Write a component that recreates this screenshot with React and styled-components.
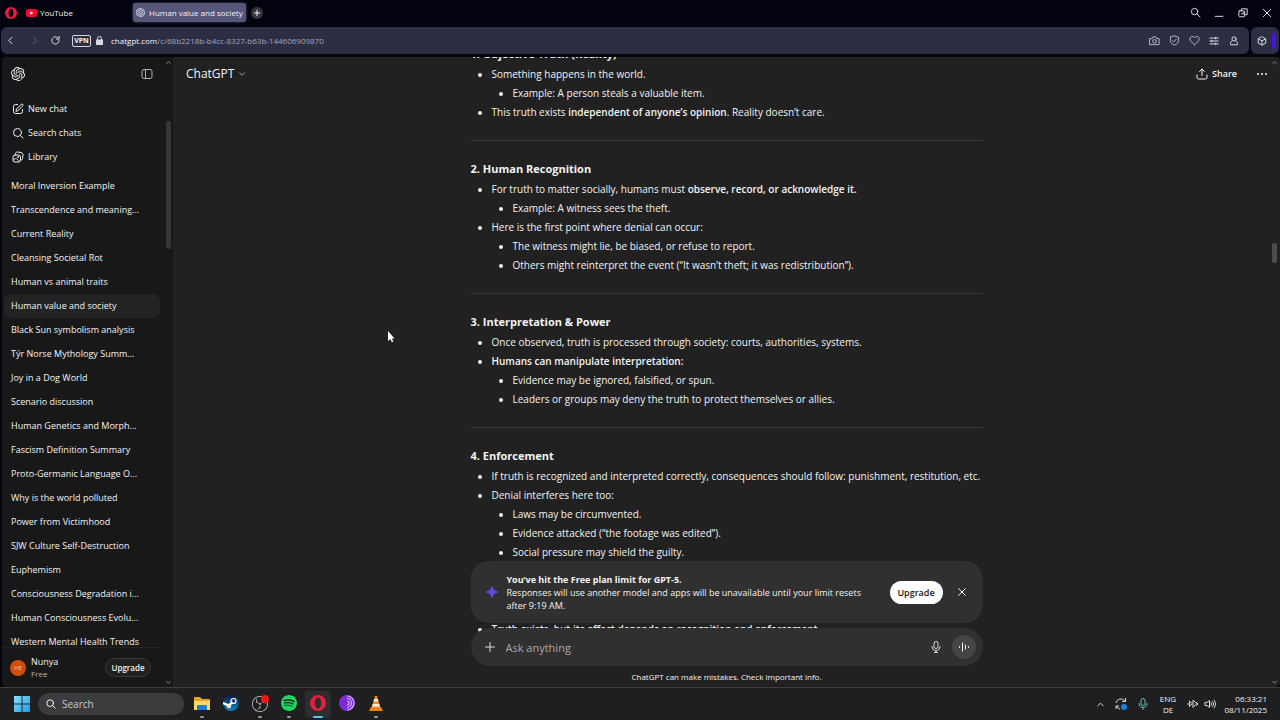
import React from "react";
import styled, { createGlobalStyle, css } from "styled-components";
import { SiOpenai, SiSpotify, SiSteam, SiObsstudio } from "react-icons/si";

const Global = createGlobalStyle`
  *, *::before, *::after { box-sizing: border-box; }
  body { margin: 0; background: #04040f; }
  body, button, input { font-family: "Open Sans", "Noto Sans", sans-serif; }
  button { margin: 0; padding: 0; border: 0; background: none; color: inherit; font-size: inherit; line-height: inherit; }
  a { color: inherit; text-decoration: none; }
  ul, h3, p { margin: 0; padding: 0; }
  svg { display: block; flex: none; }
`;

const Desktop = styled.div`
  display: flex;
  flex-direction: column;
  height: 100vh;
  overflow: hidden;
  color: #f3f3f3;
  font-size: 9px;
  line-height: 14px;
`;

/* browser chrome */
const TabBar = styled.header`
  flex: none;
  display: flex;
  align-items: center;
  height: 27px;
  padding: 0 1px 2px 5px;
  background: #03030f;
`;
const Tab = styled.button`
  flex: none;
  display: flex;
  align-items: center;
  gap: ${(p) => (p.$active ? 4 : 3)}px;
  width: ${(p) => (p.$active ? 113 : 110)}px;
  height: 19px;
  padding: 0 3px;
  border-radius: 3px;
  white-space: nowrap;
  color: #f4f4f8;
  font-size: 8px;
  ${(p) => p.$active && css`background: #54567a; box-shadow: 0 0 3px #45476a;`}
`;
const OperaButton = styled.button`
  margin-right: 6px;
`;
const NewTab = styled.button`
  display: grid;
  place-items: center;
  width: 12px;
  height: 12px;
  margin-left: 5px;
  border-radius: 50%;
  background: #34353f;
`;
const WindowButtons = styled.div`
  display: flex;
  margin-left: auto;
`;
const IconCell = styled.button`
  display: grid;
  place-items: center;
  flex: none;
  width: ${(p) => p.$w || 20}px;
  height: 20px;
  color: ${(p) => p.$color || "#d8d8e0"};
`;
const ToolRow = styled.div`
  flex: none;
  display: flex;
  gap: 2px;
  height: 27px;
  padding: 0 1px;
`;
const ToolPanel = styled.div`
  display: flex;
  align-items: center;
  border-radius: 6px;
  background: #2c2e44;
`;
const AddressPanel = styled(ToolPanel)`
  flex: 1;
  padding-right: 5px;
`;
const SidePanel = styled(ToolPanel)`
  width: 28px;
  padding: 0 3px 0 1px;
  justify-content: space-between;
`;
const PurpleBar = styled.span`
  width: 4px;
  height: 16px;
  border-radius: 2px;
  background: #4613de;
`;
const Vpn = styled.button`
  width: 19px;
  height: 12px;
  margin: 0 5px 0 8px;
  border: 1px solid #d5d5de;
  border-radius: 2px;
  font-size: 7px;
  line-height: 10px;
  font-weight: 700;
`;
const Address = styled.div`
  flex: 1;
  margin-left: 8px;
  color: #a5a6b8;
  font-size: 8px;
  b { color: #f4f4f8; font-weight: 400; }
`;

/* page */
const Page = styled.div`
  flex: 1;
  min-height: 0;
  display: flex;
  margin: 3px 0 0 2px;
  border-radius: 4px 4px 5px 5px;
  overflow: hidden;
  background: #212121;
`;
const Sidebar = styled.aside`
  flex: none;
  display: flex;
  width: 171px;
  background: #181818;
`;
const SidebarBody = styled.div`
  flex: 1;
  min-width: 0;
  display: flex;
  flex-direction: column;
`;
const SidebarHead = styled.div`
  flex: none;
  display: flex;
  align-items: center;
  justify-content: space-between;
  height: 40px;
  padding: 0 11px 6px 9px;
`;
const Nav = styled.nav`
  flex: none;
  display: flex;
  flex-direction: column;
  margin-bottom: 5px;
`;
const NavLink = styled.a`
  display: flex;
  align-items: center;
  gap: 4px;
  height: 24px;
  padding-left: 10px;
`;
const History = styled.nav`
  flex: 1;
  min-height: 0;
  overflow: hidden;
  padding: 0 4px 0 2px;
`;
const HistoryLink = styled.a`
  display: block;
  height: 24px;
  padding: 0 7px;
  border-radius: 7px;
  line-height: 24px;
  white-space: nowrap;
  background: ${(p) => (p.$active ? "#232323" : "transparent")};
`;
const Account = styled.div`
  flex: none;
  display: flex;
  align-items: center;
  gap: 5px;
  height: 40px;
  padding: 0 13px 0 8px;
  border-top: 1px solid #222;
`;
const Avatar = styled.span`
  width: 16px;
  height: 16px;
  border-radius: 50%;
  background: #d0500b;
  color: #f5c8ad;
  font-size: 6px;
  line-height: 16px;
  text-align: center;
`;
const Who = styled.div`
  flex: 1;
  line-height: 12px;
  small { display: block; color: #b5b5b5; font-size: 8px; }
`;
const OutlineButton = styled.button`
  width: 46px;
  height: 19px;
  border: 1px solid #3a3a3a;
  border-radius: 10px;
  background: #202020;
  font-size: 8px;
  font-weight: 600;
`;
const Scroll = styled.div`
  flex: none;
  display: flex;
  flex-direction: column;
  align-items: center;
  justify-content: space-between;
  width: 9px;
  padding: 2px 0 1px;
  color: #8b8b8b;
`;
const Thumb = styled.span`
  width: 5px;
  height: ${(p) => p.$h}px;
  border-radius: 2px;
  background: ${(p) => p.$bg};
`;
const ScrollTrack = styled.div`
  flex: 1;
  padding-top: ${(p) => p.$top}px;
  display: flex;
`;

const Main = styled.main`
  position: relative;
  flex: 1;
  min-width: 0;
  overflow: hidden;
`;
const MainHead = styled.div`
  position: absolute;
  inset: 0 13px auto 13px;
  display: flex;
  align-items: center;
  justify-content: space-between;
  height: 34px;
`;
const ModelButton = styled.button`
  display: flex;
  align-items: center;
  gap: 3px;
  font-size: 12px;
`;
const HeadActions = styled.div`
  display: flex;
  gap: 20px;
  font-weight: 600;
`;
const ShareButton = styled.button`
  display: flex;
  align-items: center;
  gap: 4px;
  font-weight: 600;
`;
const PageScroll = styled.div`
  position: absolute;
  inset: 0 1px 0 auto;
  display: flex;
`;
const Article = styled.article`
  width: 512px;
  margin: -13px auto 0;
  font-size: 10px;
  line-height: 19px;
  white-space: nowrap;
`;
const Section = styled.section`
  padding-bottom: 18px;
  & + & { border-top: 1px solid #383838; padding-top: 18px; }
  h3 { font-size: 11px; line-height: 20px; font-weight: 700; margin-bottom: 1px; }
  strong { font-weight: 600; }
  ul { list-style: disc; padding-left: 21px; }
`;
const Closing = styled.ul`
  padding: 40px 0 0 21px;
  font-weight: 600;
`;
const Dock = styled.div`
  position: absolute;
  inset: auto 0 0 0;
  display: flex;
  flex-direction: column;
  align-items: center;
`;
const Notice = styled.div`
  display: flex;
  align-items: center;
  width: 512px;
  height: 62px;
  margin-bottom: 5px;
  padding: 0 12px 0 14px;
  border-radius: 18px;
  background: #303030;
  line-height: 13px;
  svg { margin-right: 8px; }
`;
const NoticeText = styled.div`
  flex: 1;
  max-width: 360px;
  p { white-space: nowrap; }
  strong { display: block; font-weight: 700; }
`;
const LightButton = styled.button`
  width: 53px;
  height: 23px;
  margin-left: auto;
  margin-right: 11px;
  border-radius: 12px;
  background: #fff;
  color: #161616;
  font-weight: 600;
`;
const CloseButton = styled.button`
  width: 17px;
  height: 20px;
  display: grid;
  place-items: center;
  svg { margin: 0; }
`;
const Composer = styled.form`
  display: flex;
  align-items: center;
  width: 512px;
  height: 38px;
  padding: 0 7px 0 9px;
  border-radius: 19px;
  background: #303030;
`;
const Prompt = styled.input`
  flex: 1;
  min-width: 0;
  margin-left: 6px;
  padding: 0;
  border: 0;
  outline: 0;
  background: none;
  color: #f3f3f3;
  font-size: 11px;
  &::placeholder { color: #a9a9a9; opacity: 1; }
`;
const VoiceButton = styled.button`
  display: grid;
  place-items: center;
  width: 24px;
  height: 24px;
  margin-left: 6px;
  border-radius: 50%;
  background: #454545;
`;
const Disclaimer = styled.p`
  width: 512px;
  height: 21px;
  background: #212121;
  font-size: 8px;
  line-height: 21px;
  text-align: center;
`;

/* taskbar */
const Taskbar = styled.footer`
  flex: none;
  display: flex;
  align-items: center;
  height: 33px;
  padding: 0 13px 0 14px;
  border-top: 1px solid #3d3d40;
  background: #1f1f21;
`;
const SearchBox = styled.label`
  display: flex;
  align-items: center;
  gap: 6px;
  width: 146px;
  height: 22px;
  margin: 0 5px 0 8px;
  padding: 0 8px;
  border-radius: 11px;
  background: #3c3c3e;
  input {
    flex: 1; min-width: 0; padding: 0; border: 0; outline: 0;
    background: none; color: #eee; font-size: 10px;
  }
  input::placeholder { color: #c9c9c9; opacity: 1; }
`;
const Apps = styled.div`
  display: flex;
  gap: 3px;
`;
const AppButton = styled.button`
  display: flex;
  flex-direction: column;
  align-items: center;
  justify-content: space-between;
  width: 26px;
  height: 27px;
  padding: 4px 0 0;
  border-radius: 3px;
  background: ${(p) => (p.$active ? "#2d2d30" : "none")};
  &::after {
    content: "";
    width: ${(p) => (p.$active ? 10 : 4)}px;
    height: 2px;
    border-radius: 1px;
    background: ${(p) => (p.$active ? "#63c4ec" : p.$running ? "#9a9a9a" : "transparent")};
  }
`;
const Tray = styled.div`
  display: flex;
  align-items: center;
  margin-left: auto;
  font-size: 8px;
  line-height: 11px;
`;
const Lang = styled.button`
  width: 28px;
  text-align: center;
`;
const Clock = styled.button`
  width: 51px;
  text-align: right;
`;
const Pointer = styled.svg`
  position: absolute;
  left: 387px;
  top: 330px;
`;

const Line = ({ d, size = 12, w = 1, box = 24, children, ...rest }) => (
  <svg width={size} height={size} viewBox={`0 0 ${box} ${box}`} fill="none" stroke="currentColor"
    strokeWidth={(w * box) / size} strokeLinecap="round" strokeLinejoin="round" aria-hidden="true" {...rest}>
    {d && <path d={d} />}
    {children}
  </svg>
);

const OperaLogo = ({ size, color = "#f5183f" }) => (
  <svg width={size} height={size} viewBox="0 0 24 24" aria-hidden="true">
    <path fill={color} fillRule="evenodd" d="M12 0a12 12 0 1 0 0 24A12 12 0 0 0 12 0Zm0 3.600c2.800 0 4.900 3.600 4.900 8.400s-2.100 8.400-4.900 8.400-4.900-3.600-4.900-8.400 2.100-8.400 4.900-8.400Z" />
  </svg>
);

const UP = "M6 15l6-6 6 6";
const DOWN = "M6 9l6 6 6-6";

const chats = [
  "Moral Inversion Example", "Transcendence and meaning...", "Current Reality", "Cleansing Societal Rot",
  "Human vs animal traits", "Human value and society", "Black Sun symbolism analysis",
  "Týr Norse Mythology Summ...", "Joy in a Dog World", "Scenario discussion", "Human Genetics and Morph...",
  "Fascism Definition Summary", "Proto-Germanic Language O...", "Why is the world polluted",
  "Power from Victimhood", "SJW Culture Self-Destruction", "Euphemism", "Consciousness Degradation i...",
  "Human Consciousness Evolu...", "Western Mental Health Trends",
];

export default function App() {
  return (
    <Desktop>
      <Global />
      <TabBar>
        <OperaButton aria-label="Opera menu"><OperaLogo size={12} /></OperaButton>
        <Tab>
          <svg width="11" height="8" viewBox="0 0 22 16" aria-hidden="true">
            <rect width="22" height="16" rx="4" fill="#ff0033" /><path d="M8.500 4.500v7l6-3.500z" fill="#fff" />
          </svg>
          YouTube
        </Tab>
        <Tab $active><SiOpenai size={9} />Human value and society</Tab>
        <NewTab aria-label="New tab"><Line size={8} d="M12 4v16M4 12h16" /></NewTab>
        <WindowButtons>
          <IconCell $w={24} aria-label="Search tabs"><Line size={11}><circle cx="10" cy="10" r="7" /><path d="M15 15l7 7" /></Line></IconCell>
          <IconCell $w={24} aria-label="Minimize"><Line size={10} d="M3 20h18" /></IconCell>
          <IconCell $w={24} aria-label="Restore"><Line size={10}><rect x="2" y="7" width="14" height="14" rx="2" /><path d="M8 7V2h14v14h-6M8 14h6V9" /></Line></IconCell>
          <IconCell $w={24} aria-label="Close"><Line size={10} d="M3 3l18 18M21 3L3 21" /></IconCell>
        </WindowButtons>
      </TabBar>
      <ToolRow>
        <AddressPanel>
          <IconCell aria-label="Back"><Line size={11} d="M13 5l-7 7 7 7" /></IconCell>
          <IconCell $w={26} $color="#62647a" aria-label="Forward"><Line size={11} d="M9 5l7 7-7 7" /></IconCell>
          <IconCell $w={17} aria-label="Reload"><Line size={11} d="M20 12a8 8 0 1 1-2.500-6M20 3v6h-6" /></IconCell>
          <Vpn>VPN</Vpn>
          <svg width="7" height="9" viewBox="0 0 14 18" aria-hidden="true">
            <rect y="7" width="14" height="11" rx="1" fill="#d8d8e0" /><path d="M3 8V5a4 4 0 0 1 8 0v3" fill="none" stroke="#d8d8e0" strokeWidth="2" />
          </svg>
          <Address><b>chatgpt.com</b>/c/68b2218b-b4cc-8327-b63b-144606909870</Address>
          <IconCell $color="#b4b5c6" aria-label="Snapshot"><Line size={11}><path d="M2 8h5l2-4h6l2 4h5v13H2z" /><circle cx="12" cy="14" r="4" /></Line></IconCell>
          <IconCell $color="#b4b5c6" aria-label="Shield"><Line size={11} d="M12 2l9 3v7c0 5-4 8-9 10-5-2-9-5-9-10V5zM8 12l3 3 5-6" /></IconCell>
          <IconCell $color="#b4b5c6" aria-label="Favourites"><Line size={11} d="M12 21C5 16 2 12 2 8.500 2 5 4.500 3 7 3s4 1.500 5 3c1-1.500 2.500-3 5-3s5 2 5 5.500C22 12 19 16 12 21z" /></IconCell>
          <IconCell aria-label="Easy setup"><Line size={10} d="M2 5h20M2 12h20M2 19h20M16 3v4M7 10v4M16 17v4" /></IconCell>
          <IconCell aria-label="Profile"><Line size={10}><circle cx="12" cy="7" r="5" /><path d="M8 11c-4 2-5 5-4 10h16c1-5 0-8-4-10" /></Line></IconCell>
        </AddressPanel>
        <SidePanel>
          <IconCell aria-label="Extensions"><Line size={10} d="M12 2l9 5v10l-9 5-9-5V7zM4 7l8 5 8-5M12 12v9" /></IconCell>
          <PurpleBar />
        </SidePanel>
      </ToolRow>

      <Page>
        <Sidebar>
          <SidebarBody>
            <SidebarHead>
              <SiOpenai size={14} />
              <button aria-label="Close sidebar"><Line size={12} color="#b0b0b0"><rect x="2" y="3" width="20" height="18" rx="4" /><path d="M9 3v18" /></Line></button>
            </SidebarHead>
            <Nav>
              <NavLink href="#new"><Line size={12} d="M11 3H7a4 4 0 0 0-4 4v10a4 4 0 0 0 4 4h10a4 4 0 0 0 4-4v-4M8 16l1-4 9.500-9.500a2 2 0 0 1 3 3L12 15z" />New chat</NavLink>
              <NavLink href="#search"><Line size={12}><circle cx="11" cy="11" r="8" /><path d="M17 17l5 5" /></Line>Search chats</NavLink>
              <NavLink href="#library"><Line size={12}><rect x="2" y="8" width="15" height="14" rx="4" /><path d="M7 5c1-3 2-3 4-3l7 1c3 1 4 2 4 5l-1 7c0 2-1 3-3 3M3 18c4-5 7-4 11 3" /><circle cx="12" cy="12" r="1" /></Line>Library</NavLink>
            </Nav>
            <History>
              {chats.map((c) => <HistoryLink key={c} href="#chat" $active={c === "Human value and society"}>{c}</HistoryLink>)}
            </History>
            <Account>
              <Avatar>HE</Avatar>
              <Who>Nunya<small>Free</small></Who>
              <OutlineButton>Upgrade</OutlineButton>
            </Account>
          </SidebarBody>
          <Scroll>
            <Line size={7} d={UP} />
            <ScrollTrack $top={55}><Thumb $h={128} $bg="#363636" /></ScrollTrack>
            <Line size={7} d={DOWN} />
          </Scroll>
        </Sidebar>

        <Main>
          <Article>
            <Section>
              <h3>1. Objective Truth (Reality)</h3>
              <ul>
                <li>Something happens in the world.
                  <ul><li>Example: A person steals a valuable item.</li></ul>
                </li>
                <li>This truth exists <strong>independent of anyone’s opinion</strong>. Reality doesn’t care.</li>
              </ul>
            </Section>
            <Section>
              <h3>2. Human Recognition</h3>
              <ul>
                <li>For truth to matter socially, humans must <strong>observe, record, or acknowledge it.</strong>
                  <ul><li>Example: A witness sees the theft.</li></ul>
                </li>
                <li>Here is the first point where denial can occur:
                  <ul>
                    <li>The witness might lie, be biased, or refuse to report.</li>
                    <li>Others might reinterpret the event (“It wasn’t theft; it was redistribution”).</li>
                  </ul>
                </li>
              </ul>
            </Section>
            <Section>
              <h3>3. Interpretation &amp; Power</h3>
              <ul>
                <li>Once observed, truth is processed through society: courts, authorities, systems.</li>
                <li><strong>Humans can manipulate interpretation:</strong>
                  <ul>
                    <li>Evidence may be ignored, falsified, or spun.</li>
                    <li>Leaders or groups may deny the truth to protect themselves or allies.</li>
                  </ul>
                </li>
              </ul>
            </Section>
            <Section>
              <h3>4. Enforcement</h3>
              <ul>
                <li>If truth is recognized and interpreted correctly, consequences should follow: punishment, restitution, etc.</li>
                <li>Denial interferes here too:
                  <ul>
                    <li>Laws may be circumvented.</li>
                    <li>Evidence attacked (“the footage was edited”).</li>
                    <li>Social pressure may shield the guilty.</li>
                  </ul>
                </li>
              </ul>
            </Section>
            <Closing><li>Truth exists, but its effect depends on recognition and enforcement</li></Closing>
          </Article>
          <MainHead>
            <ModelButton>ChatGPT<Line size={10} d={DOWN} color="#a0a0a0" /></ModelButton>
            <HeadActions>
              <ShareButton><Line size={12} d="M12 15V2M7 7l5-5 5 5M2 14v5a3 3 0 0 0 3 3h14a3 3 0 0 0 3-3v-5" />Share</ShareButton>
              <button aria-label="More">
                <svg width="10" height="4" viewBox="0 0 10 4" fill="#f3f3f3"><circle cx="1" cy="2" r="1" /><circle cx="5" cy="2" r="1" /><circle cx="9" cy="2" r="1" /></svg>
              </button>
            </HeadActions>
          </MainHead>
          <Dock>
            <Notice>
              <svg width="14" height="14" viewBox="0 0 24 24" fill="#5b4fd6"><path d="M12 0c1.500 7 4.500 10.500 12 12-7.500 1.500-10.500 5-12 12-1.500-7-4.500-10.500-12-12C7.500 10.500 10.500 7 12 0z" /></svg>
              <NoticeText>
                <strong>You’ve hit the Free plan limit for GPT-5.</strong>
                <p>Responses will use another model and apps will be unavailable until your limit resets<br />after 9:19 AM.</p>
              </NoticeText>
              <LightButton>Upgrade</LightButton>
              <CloseButton aria-label="Dismiss"><Line size={10} d="M4 4l16 16M20 4L4 20" /></CloseButton>
            </Notice>
            <Composer onSubmit={(e) => e.preventDefault()}>
              <IconCell type="button" aria-label="Add"><Line size={12} d="M12 3v18M3 12h18" /></IconCell>
              <Prompt aria-label="Message" placeholder="Ask anything" />
              <IconCell type="button" aria-label="Dictate"><Line size={12}><rect x="8" y="1" width="8" height="14" rx="4" /><path d="M4 11c0 5 3 8 8 8s8-3 8-8M12 19v4M9 23h6" /></Line></IconCell>
              <VoiceButton type="button" aria-label="Voice mode"><Line size={12} d="M3 11v2M9 4v16M15 8v8M21 11v2" /></VoiceButton>
            </Composer>
            <Disclaimer>ChatGPT can make mistakes. Check important info.</Disclaimer>
          </Dock>
          <PageScroll>
            <Scroll>
              <Line size={7} d={UP} />
              <ScrollTrack $top={177}><Thumb $h={20} $bg="#4c4c4c" /></ScrollTrack>
              <Line size={7} d={DOWN} />
            </Scroll>
          </PageScroll>
        </Main>
      </Page>

      <Taskbar>
        <button aria-label="Start">
          <svg width="16" height="16" viewBox="0 0 16 16">
            <defs><linearGradient id="win" x1="0" y1="0" x2="1" y2="1"><stop offset="0" stopColor="#8be0fb" /><stop offset="1" stopColor="#1a9bea" /></linearGradient></defs>
            <path fill="url(#win)" d="M0 0h7.500v7.500H0zM8.500 0H16v7.500H8.500zM0 8.500h7.500V16H0zM8.500 8.500H16V16H8.500z" />
          </svg>
        </button>
        <SearchBox><Line size={10} w={1}><circle cx="10" cy="10" r="8" /><path d="M16 16l6 6" /></Line><input aria-label="Search" placeholder="Search" /></SearchBox>
        <Apps>
          <AppButton $running aria-label="File Explorer">
            <svg width="18" height="17" viewBox="0 0 18 17"><path d="M1 3a1 1 0 0 1 1-1h5l2 2h7a1 1 0 0 1 1 1v10H1z" fill="#e8a520" /><path d="M1 6h16v9H1z" fill="#fcd667" /><path d="M4 15v-4a1 1 0 0 1 1-1h8a1 1 0 0 1 1 1v4z" fill="#1d7fd0" /></svg>
          </AppButton>
          <AppButton aria-label="Steam">
            <svg width="16" height="16" viewBox="0 0 16 16">
              <defs><linearGradient id="steam" x1="0" y1="0" x2="0" y2="1"><stop offset="0" stopColor="#0d1b3d" /><stop offset="1" stopColor="#1583c4" /></linearGradient></defs>
              <circle cx="8" cy="8" r="8" fill="url(#steam)" />
              <path d="M0 8l6 2.500L9.500 7" fill="none" stroke="#fff" strokeWidth="2.400" />
              <circle cx="10.500" cy="6" r="2.500" fill="none" stroke="#fff" strokeWidth="1.200" />
              <circle cx="6" cy="11" r="1.800" fill="none" stroke="#fff" />
            </svg>
          </AppButton>
          <AppButton $running aria-label="OBS">
            <svg width="18" height="17" viewBox="0 0 18 17"><g transform="translate(1 1)"><SiObsstudio size={16} color="#cfcfcf" /></g><circle cx="14" cy="4" r="4" fill="#f01616" /></svg>
          </AppButton>
          <AppButton $running aria-label="Spotify"><SiSpotify size={16} color="#1ed760" /></AppButton>
          <AppButton $active aria-label="Opera"><OperaLogo size={16} color="#e0203c" /></AppButton>
          <AppButton aria-label="Tor Browser">
            <svg width="16" height="16" viewBox="0 0 16 16"><circle cx="8" cy="8" r="8" fill="#7d2bd6" /><path d="M8 1a7 7 0 0 1 0 14M8 3.500a4.500 4.500 0 0 1 0 9M8 6a2 2 0 0 1 0 4" fill="none" stroke="#dcb8ff" strokeWidth="1.200" /></svg>
          </AppButton>
          <AppButton $running aria-label="VLC">
            <svg width="16" height="17" viewBox="0 0 16 17"><path d="M3 12h10l2 4H1z" fill="#f08010" /><path d="M7 1h2l3.500 12c-2 1.500-7 1.500-9 0z" fill="#f58b1a" /><path d="M6.200 4h3.600l.8 2.600H5.400zM4.700 9h6.600l.7 2.400H4z" fill="#eee" /></svg>
          </AppButton>
        </Apps>
        <Tray>
          <IconCell aria-label="Hidden icons"><Line size={11} w={1} d={UP} /></IconCell>
          <IconCell $w={22} aria-label="Update">
            <svg width="12" height="12" viewBox="0 0 12 12" fill="none" stroke="#d8d8d8"><path d="M1 5a5 5 0 0 1 9-2M10.500 0v3.500H7M5 11a5 5 0 0 1-3.500-3M1 11V8h3" /><circle cx="9" cy="9" r="3" fill="#1583dc" stroke="none" /></svg>
          </IconCell>
          <IconCell $w={22} $color="#6dc0b4" aria-label="Microphone"><Line size={12}><rect x="8" y="1" width="8" height="14" rx="4" /><path d="M4 11c0 5 3 8 8 8s8-3 8-8M12 19v4" /></Line></IconCell>
          <Lang>ENG<br />DE</Lang>
          <IconCell $w={22} aria-label="Network"><Line size={12} d="M1 12h4M5 7v10l5-5zM12 5v14l7-7zM19 9l3 3-3 3" /></IconCell>
          <IconCell $w={12} aria-label="Volume"><Line size={12} d="M2 9v6h4l5 4V5L6 9zM14 9c1.500 2 1.500 4 0 6M17 7c3 3 3 7 0 10M20 4c4 5 4 11 0 16" /></IconCell>
          <Clock>06:33:21<br />08/11/2025</Clock>
        </Tray>
      </Taskbar>
      <Pointer width="8" height="13" viewBox="0 0 8 13"><path d="M1 1v10l2.300-2 1.500 3.200 1.500-.7-1.400-3H7.500z" fill="#fff" /></Pointer>
    </Desktop>
  );
}
